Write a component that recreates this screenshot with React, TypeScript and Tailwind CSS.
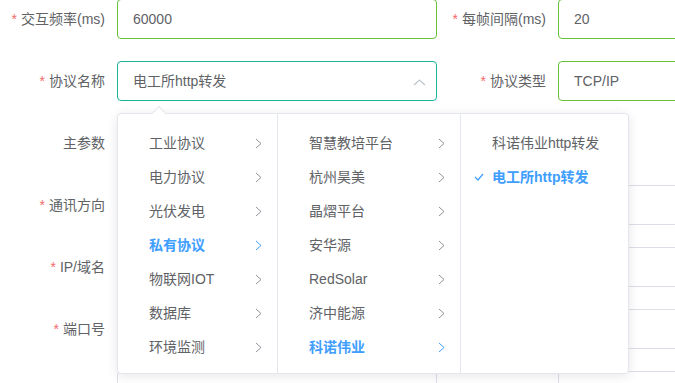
import React from "react";

const font = "font-['Liberation_Sans','Noto_Sans_CJK_SC',sans-serif]";

function Label({ text, required = true, w }: { text: string; required?: boolean; w: string }) {
  return (
    <div className={`${w} shrink-0 pr-3 text-right text-[14px] text-[#606266] leading-10`}>
      {required && <span className="mr-1 text-[#f56c6c]">*</span>}
      {text}
    </div>
  );
}

function Input({ value, w, border = "border-[#67c23a]", children }: { value?: string; w: string; border?: string; children?: React.ReactNode }) {
  return (
    <div className={`${w} relative h-10 shrink-0 rounded border ${border} bg-white px-[15px] text-[14px] leading-[38px] text-[#606266]`}>
      {value}
      {children}
    </div>
  );
}

function Arrow({ active }: { active?: boolean }) {
  return (
    <svg width="7" height="11" viewBox="0 0 7 11" className="shrink-0">
      <polyline points="1,1 6,5.5 1,10" fill="none" stroke={active ? "#409eff" : "#909399"} strokeWidth="1" />
    </svg>
  );
}

const col1 = ["工业协议", "电力协议", "光伏发电", "私有协议", "物联网IOT", "数据库", "环境监测"];
const col2 = ["智慧教培平台", "杭州昊美", "晶熠平台", "安华源", "RedSolar", "济中能源", "科诺伟业"];

function Column({ items, active, width, border = true }: { items: string[]; active: string; width: string; border?: boolean }) {
  return (
    <div className={`${width} h-full pt-3 ${border ? "border-r border-[#e4e7ed]" : ""}`}>
      {items.map((it) => (
        <div key={it} className="flex h-[34px] items-center justify-between pl-[31px] pr-[15px]">
          <span className={it === active ? "font-bold text-[#409eff]" : "text-[#606266]"}>{it}</span>
          <Arrow active={it === active} />
        </div>
      ))}
    </div>
  );
}

export default function App() {
  return (
    <div className={`relative h-[383px] w-[675px] overflow-hidden bg-white ${font}`}>
      <div className="-mt-px flex flex-col gap-[22px]">
        <div className="flex">
          <Label text="交互频率(ms)" w="w-[117px]" />
          <Input value="60000" w="w-[320px]" />
          <Label text="每帧间隔(ms)" w="w-[121px]" />
          <Input value="20" w="w-[200px]" />
        </div>
        <div className="flex">
          <Label text="协议名称" w="w-[117px]" />
          <Input value="电工所http转发" w="w-[320px]" border="border-[#1ab39c]">
            <svg width="13" height="7" viewBox="0 0 13 7" className="absolute right-[10px] top-[17px]">
              <polyline points="1,6 6.5,1 12,6" fill="none" stroke="#c0c4cc" strokeWidth="1.2" />
            </svg>
          </Input>
          <Label text="协议类型" w="w-[121px]" />
          <Input value="TCP/IP" w="w-[200px]" />
        </div>
        <div className="flex">
          <Label text="主参数" required={false} w="w-[117px]" />
          <Input w="w-[320px]" border="border-[#dcdfe6]" />
        </div>
        <div className="flex">
          <Label text="通讯方向" w="w-[117px]" />
          <Input w="w-[320px]" border="border-[#dcdfe6]" />
          <div className="w-[121px] shrink-0" />
          <Input w="w-[200px]" border="border-[#dcdfe6]" />
        </div>
        <div className="flex">
          <Label text="IP/域名" w="w-[117px]" />
          <Input w="w-[320px]" border="border-[#dcdfe6]" />
          <div className="w-[121px] shrink-0" />
          <Input w="w-[200px]" border="border-[#dcdfe6]" />
        </div>
        <div className="flex">
          <Label text="端口号" w="w-[117px]" />
          <Input w="w-[320px]" border="border-[#dcdfe6]" />
          <div className="w-[121px] shrink-0" />
          <Input w="w-[200px]" border="border-[#dcdfe6]" />
        </div>
        <div className="flex">
          <Label text="" required={false} w="w-[117px]" />
          <Input w="w-[320px]" border="border-[#dcdfe6]" />
          <div className="w-[121px] shrink-0" />
          <Input w="w-[200px]" border="border-[#dcdfe6]" />
        </div>
      </div>

      {/* cascader dropdown */}
      <div className="absolute left-[117px] top-[113px] flex h-[261px] rounded border border-[#e4e7ed] bg-white text-[14px] shadow-[0_2px_12px_0_rgba(0,0,0,0.1)]">
        <div className="absolute -top-[6px] left-[36px] h-[10px] w-[10px] rotate-45 border-l border-t border-[#e4e7ed] bg-white" />
        <Column items={col1} active="私有协议" width="w-[160px]" />
        <Column items={col2} active="科诺伟业" width="w-[183px]" />
        <div className="h-full w-[167px] pt-3">
          <div className="flex h-[34px] items-center pl-[31px] text-[#606266]">科诺伟业http转发</div>
          <div className="relative flex h-[34px] items-center pl-[31px] font-bold text-[#409eff]">
            <svg width="10" height="8" viewBox="0 0 10 8" className="absolute left-[13px] top-[13px]">
              <polyline points="1,4 4,7 9,1" fill="none" stroke="#409eff" strokeWidth="1.2" />
            </svg>
            电工所http转发
          </div>
        </div>
      </div>
    </div>
  );
}
